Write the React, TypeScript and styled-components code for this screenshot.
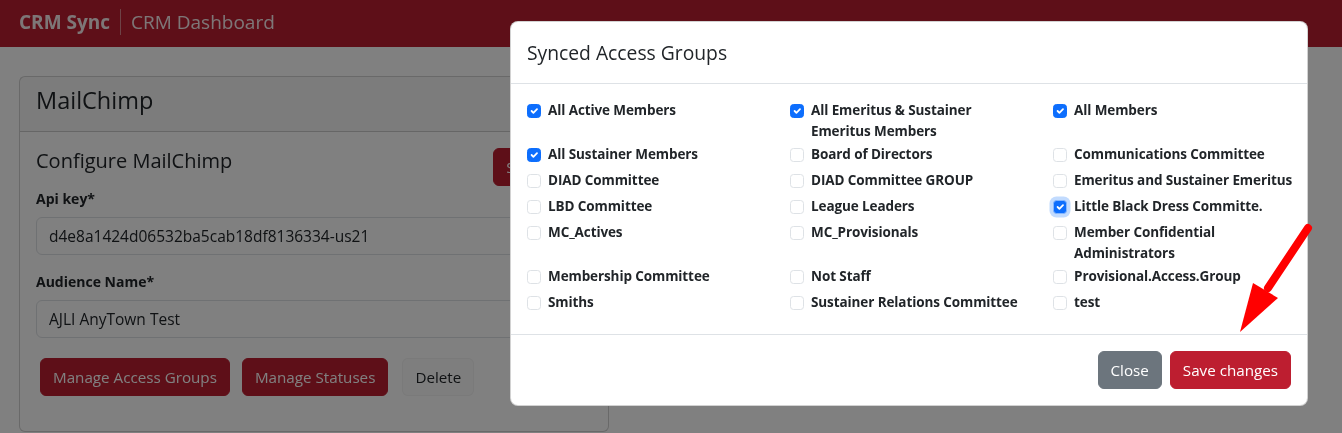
import React from "react";
import styled, { createGlobalStyle } from "styled-components";

const RED = "#bd1e30";

const GlobalStyle = createGlobalStyle`
  html, body {
    margin: 0;
    padding: 0;
    background: #808080;
    font-family: "Open Sans", "Noto Sans", sans-serif;
    color: #212529;
  }
  * {
    box-sizing: border-box;
  }
`;

// ----- page under the dialog (dimmed like a modal backdrop) -----

const DimmedPage = styled.div`
  min-height: 100vh;
  background: #fff;
  filter: brightness(0.5);
`;

const TopBar = styled.nav`
  height: 47px;
  background: ${RED};
  display: flex;
  align-items: center;
  padding: 0 19px 4px;
  color: rgba(255, 255, 255, 0.92);
  font-size: 19px;
`;

const Brand = styled.span`
  font-weight: 700;
`;

const Divider = styled.span`
  width: 1px;
  height: 26px;
  margin: 0 10px;
  background: rgba(255, 255, 255, 0.45);
`;

const PageTitle = styled.span`
  font-weight: 400;
`;

const Page = styled.main`
  padding: 29px 19px 0;
`;

const Card = styled.section`
  width: 590px;
  border: 1px solid rgba(0, 0, 0, 0.175);
  border-radius: 6px;
  background: #fff;
`;

const CardHeader = styled.div`
  padding: 8px 16px;
  background: rgba(0, 0, 0, 0.03);
  border-bottom: 1px solid rgba(0, 0, 0, 0.175);
`;

const CardTitle = styled.h4`
  margin: 0 0 8px;
  font-size: 23.5px;
  font-weight: 500;
  line-height: 30px;
`;

const CardBody = styled.div`
  padding: 16px;
`;

const SectionHead = styled.div`
  display: flex;
  justify-content: space-between;
  align-items: flex-start;
  margin-bottom: 2px;
`;

const SectionTitle = styled.h5`
  margin: 0;
  font-size: 20px;
  font-weight: 500;
  line-height: 26px;
`;

const FieldLabel = styled.label`
  display: block;
  font-size: 14px;
  font-weight: 700;
  line-height: 21px;
  margin-bottom: 8px;
`;

const Field = styled.div`
  margin-bottom: 16px;
`;

const TextInput = styled.input`
  display: block;
  width: 100%;
  height: 38px;
  padding: 6px 12px;
  font: inherit;
  font-size: 15.5px;
  color: #212529;
  background: #fff;
  border: 1px solid #dee2e6;
  border-radius: 6px;
`;

const ButtonRow = styled.div`
  display: flex;
  gap: 12px;
  padding: 4px;
  margin-bottom: 15px;
`;

const Button = styled.button<{ $variant: "red" | "gray" | "light" }>`
  height: 38px;
  padding: 6px 12px;
  font: inherit;
  font-size: 15.2px;
  line-height: 24px;
  border-radius: 6px;
  cursor: pointer;
  color: ${(p) => (p.$variant === "light" ? "#212529" : "#fff")};
  background: ${(p) =>
    p.$variant === "red" ? RED : p.$variant === "gray" ? "#6c757d" : "#fcfcfc"};
  border: 1px solid
    ${(p) =>
      p.$variant === "red"
        ? RED
        : p.$variant === "gray"
        ? "#6c757d"
        : "rgba(0,0,0,0.035)"};
  margin-left: ${(p) => (p.$variant === "light" ? "2px" : "0")};
`;

// ----- dialog -----

const Modal = styled.div`
  position: fixed;
  top: 21px;
  left: 510px;
  z-index: 1050;
  width: 798px;
  background: #fff;
  border: 1px solid rgba(0, 0, 0, 0.175);
  border-radius: 8px;
`;

const ModalHeader = styled.div`
  padding: 16px;
  border-bottom: 1px solid #dee2e6;
`;

const ModalTitle = styled.h5`
  margin: 0;
  font-size: 19.3px;
  font-weight: 500;
  line-height: 29px;
`;

const ModalBody = styled.div`
  padding: 16px;
`;

const GroupGrid = styled.div`
  display: grid;
  grid-template-columns: repeat(3, 255px);
  column-gap: 8px;
`;

const GroupItem = styled.label`
  display: flex;
  align-items: flex-start;
  gap: 7px;
  min-height: 24px;
  margin-bottom: 2px;
  padding-right: 14px;
`;

const Box = styled.span<{ $checked: boolean; $focused?: boolean }>`
  flex: 0 0 14px;
  width: 14px;
  height: 14px;
  margin-top: 3.5px;
  border-radius: 3.5px;
  display: flex;
  align-items: center;
  justify-content: center;
  background: ${(p) => (p.$checked ? "#0d6efd" : "#fff")};
  border: 1px solid
    ${(p) => (p.$focused ? "#86b7fe" : p.$checked ? "#0d6efd" : "#dee2e6")};
  box-shadow: ${(p) =>
    p.$focused ? "0 0 0 3.5px rgba(13, 110, 253, 0.25)" : "none"};
`;

const GroupLabel = styled.span`
  font-size: 13.5px;
  font-weight: 700;
  line-height: 21px;
  letter-spacing: -0.1px;
`;

const ModalFooter = styled.div`
  display: flex;
  justify-content: flex-end;
  gap: 8px;
  padding: 16px;
  border-top: 1px solid #dee2e6;
`;

const Pointer = styled.svg`
  position: fixed;
  left: 1230px;
  top: 220px;
  z-index: 1060;
`;

const groups: { name: string; checked?: boolean; focused?: boolean }[] = [
  { name: "All Active Members", checked: true },
  { name: "All Emeritus & Sustainer Emeritus Members", checked: true },
  { name: "All Members", checked: true },
  { name: "All Sustainer Members", checked: true },
  { name: "Board of Directors" },
  { name: "Communications Committee" },
  { name: "DIAD Committee" },
  { name: "DIAD Committee GROUP" },
  { name: "Emeritus and Sustainer Emeritus" },
  { name: "LBD Committee" },
  { name: "League Leaders" },
  { name: "Little Black Dress Committe.", checked: true, focused: true },
  { name: "MC_Actives" },
  { name: "MC_Provisionals" },
  { name: "Member Confidential Administrators" },
  { name: "Membership Committee" },
  { name: "Not Staff" },
  { name: "Provisional.Access.Group" },
  { name: "Smiths" },
  { name: "Sustainer Relations Committee" },
  { name: "test" },
];

const Check = () => (
  <svg width="12" height="12" viewBox="0 0 20 20">
    <path
      d="m6 10 3 3 6-6"
      fill="none"
      stroke="#fff"
      strokeWidth="3"
      strokeLinecap="round"
      strokeLinejoin="round"
    />
  </svg>
);

export default function App() {
  return (
    <>
      <GlobalStyle />
      <DimmedPage>
        <TopBar>
          <Brand>CRM Sync</Brand>
          <Divider />
          <PageTitle>CRM Dashboard</PageTitle>
        </TopBar>
        <Page>
          <Card>
            <CardHeader>
              <CardTitle>MailChimp</CardTitle>
            </CardHeader>
            <CardBody>
              <SectionHead>
                <SectionTitle>Configure MailChimp</SectionTitle>
                <Button $variant="red">Sync Now!</Button>
              </SectionHead>
              <Field>
                <FieldLabel>Api key*</FieldLabel>
                <TextInput readOnly value="d4e8a1424d06532ba5cab18df8136334-us21" />
              </Field>
              <Field>
                <FieldLabel>Audience Name*</FieldLabel>
                <TextInput readOnly value="AJLI AnyTown Test" />
              </Field>
              <ButtonRow>
                <Button $variant="red">Manage Access Groups</Button>
                <Button $variant="red">Manage Statuses</Button>
                <Button $variant="light">Delete</Button>
              </ButtonRow>
            </CardBody>
          </Card>
        </Page>
      </DimmedPage>

      <Modal>
        <ModalHeader>
          <ModalTitle>Synced Access Groups</ModalTitle>
        </ModalHeader>
        <ModalBody>
          <GroupGrid>
            {groups.map((g) => (
              <GroupItem key={g.name}>
                <Box $checked={!!g.checked} $focused={g.focused}>
                  {g.checked && <Check />}
                </Box>
                <GroupLabel>{g.name}</GroupLabel>
              </GroupItem>
            ))}
          </GroupGrid>
        </ModalBody>
        <ModalFooter>
          <Button $variant="gray">Close</Button>
          <Button $variant="red">Save changes</Button>
        </ModalFooter>
      </Modal>

      {/* annotation arrow */}
      <Pointer width="90" height="120" viewBox="0 0 90 120">
        <line
          x1="78"
          y1="8"
          x2="38"
          y2="68"
          stroke="#ff0000"
          strokeWidth="8"
          strokeLinecap="round"
        />
        <polygon points="23,63 48,78 10,112" fill="#ff0000" />
      </Pointer>
    </>
  );
}
